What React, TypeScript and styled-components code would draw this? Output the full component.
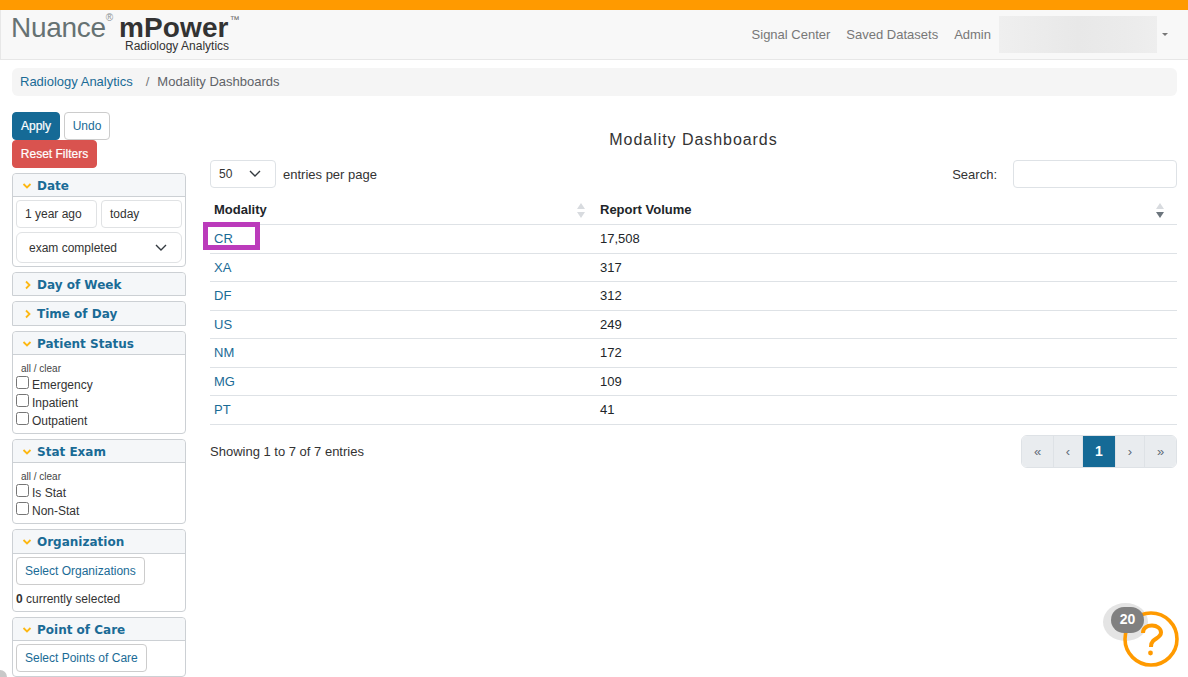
import React from "react";
import styled, { createGlobalStyle } from "styled-components";

const GlobalStyle = createGlobalStyle`
  * { box-sizing: border-box; }
  html, body { margin: 0; height: 100%; overflow: hidden; background: #fff; }
  body { font-family: "Liberation Sans", Arial, sans-serif; font-size: 12px; color: #333; }
`;

const rows = [
  ["CR", "17,508"],
  ["XA", "317"],
  ["DF", "312"],
  ["US", "249"],
  ["NM", "172"],
  ["MG", "109"],
  ["PT", "41"],
];

const Chevron = ({ open }: { open: boolean }) => (
  <ChevronIcon viewBox="0 0 10 10" $open={open}>
    <path d={open ? "M1.5 3 L5 6.5 L8.5 3" : "M3 1.5 L6.5 5 L3 8.5"} />
  </ChevronIcon>
);

const SelectArrow = () => (
  <SelectArrowIcon viewBox="0 0 12 8">
    <path d="M1 1 L6 6 L11 1" />
  </SelectArrowIcon>
);

const Check = ({ label }: { label: string }) => (
  <CheckRow>
    <CheckBox />
    <span>{label}</span>
  </CheckRow>
);

export default function App() {
  return (
    <>
      <GlobalStyle />
      <Page>
        <TopStripe />
        <Navbar>
          <Logo>
            <LogoLine>
              <Nuance>Nuance</Nuance>
              <Reg>®</Reg>
              <MPower>mPower</MPower>
              <Tm>™</Tm>
            </LogoLine>
            <LogoSub>Radiology Analytics</LogoSub>
          </Logo>
          <NavLinks>
            <NavLink>Signal Center</NavLink>
            <NavLink>Saved Datasets</NavLink>
            <NavLink>Admin</NavLink>
            <BlurredUser />
            <Caret />
          </NavLinks>
        </Navbar>
        <Breadcrumb>
          <CrumbLink>Radiology Analytics</CrumbLink>
          <CrumbSep>/</CrumbSep>
          <CrumbCurrent>Modality Dashboards</CrumbCurrent>
        </Breadcrumb>
        <Content>
          <Sidebar>
            <ActionRow>
              <ApplyBtn>Apply</ApplyBtn>
              <UndoBtn>Undo</UndoBtn>
            </ActionRow>
            <ResetBtn>Reset Filters</ResetBtn>
            <Panels>
              <Panel>
                <PanelHead $h={23}><Chevron open />Date</PanelHead>
                <DateBody>
                  <DateRow>
                    <DateInput $w={81}>1 year ago</DateInput>
                    <DateInput $w={81}>today</DateInput>
                  </DateRow>
                  <DateSelect>exam completed<SelectArrow /></DateSelect>
                </DateBody>
              </Panel>
              <ClosedPanel><PanelHead $h={22}><Chevron open={false} />Day of Week</PanelHead></ClosedPanel>
              <ClosedPanel><PanelHead $h={23}><Chevron open={false} />Time of Day</PanelHead></ClosedPanel>
              <Panel>
                <PanelHead $h={23}><Chevron open />Patient Status</PanelHead>
                <CheckBody>
                  <AllClear>all / clear</AllClear>
                  <Check label="Emergency" />
                  <Check label="Inpatient" />
                  <Check label="Outpatient" />
                </CheckBody>
              </Panel>
              <Panel>
                <PanelHead $h={23}><Chevron open />Stat Exam</PanelHead>
                <CheckBody>
                  <AllClear>all / clear</AllClear>
                  <Check label="Is Stat" />
                  <Check label="Non-Stat" />
                </CheckBody>
              </Panel>
              <Panel>
                <PanelHead $h={24}><Chevron open />Organization</PanelHead>
                <SelectBody>
                  <OutlineBtn>Select Organizations</OutlineBtn>
                  <Selected><b>0</b> currently selected</Selected>
                </SelectBody>
              </Panel>
              <Panel>
                <PanelHead $h={23}><Chevron open />Point of Care</PanelHead>
                <SelectBody>
                  <OutlineBtn>Select Points of Care</OutlineBtn>
                </SelectBody>
              </Panel>
            </Panels>
          </Sidebar>
          <Main>
            <Title>Modality Dashboards</Title>
            <Controls>
              <EntriesWrap>
                <EntriesSelect>50<SelectArrow /></EntriesSelect>
                <span>entries per page</span>
              </EntriesWrap>
              <SearchWrap>
                <span>Search:</span>
                <SearchInput />
              </SearchWrap>
            </Controls>
            <Table>
              <thead>
                <tr>
                  <HeadCell $w={386}>Modality<SortArrows $active={false} /></HeadCell>
                  <HeadCell>Report Volume<SortArrows $active /></HeadCell>
                </tr>
              </thead>
              <tbody>
                {rows.map(([name, value], i) => (
                  <tr key={name}>
                    <Cell>
                      <RowLink>{name}</RowLink>
                      {i === 0 && <Highlight />}
                    </Cell>
                    <Cell>{value}</Cell>
                  </tr>
                ))}
              </tbody>
            </Table>
            <Footer>
              <span>Showing 1 to 7 of 7 entries</span>
              <Pager>
                <PageBtn $w={31}>«</PageBtn>
                <PageBtn $w={29}>‹</PageBtn>
                <PageBtn $w={33} $active>1</PageBtn>
                <PageBtn $w={29}>›</PageBtn>
                <PageBtn $w={32}>»</PageBtn>
              </Pager>
            </Footer>
          </Main>
        </Content>
        <HelpWidget>
          <HelpHalo />
          <HelpRing viewBox="0 0 58 58">
            <circle cx="29" cy="29" r="26" />
            <path d="M21 23 C21 18 25 15.5 30 15.5 C35 15.5 39 18.5 39 22.5 C39 27 34 28 31 31 C29.5 32.5 29 34 29 37" />
            <circle className="dot" cx="28.5" cy="43" r="2.4" />
          </HelpRing>
          <HelpBadge>20</HelpBadge>
        </HelpWidget>
        <CornerMark />
      </Page>
    </>
  );
}

const Page = styled.div`
  position: relative;
  width: 1188px;
  height: 677px;
  overflow: hidden;
`;

const TopStripe = styled.div`
  height: 10px;
  background: #ff9a00;
`;

const Navbar = styled.nav`
  height: 50px;
  display: flex;
  align-items: center;
  justify-content: space-between;
  padding: 0 20px 0 10px;
  background: #f8f8f8;
  border-bottom: 1px solid #e7e7e7;
  border-left: 1px solid #e7e7e7;
`;

const Logo = styled.div`
  display: flex;
  flex-direction: column;
  height: 50px;
  padding-top: 5px;
`;

const LogoLine = styled.div`
  display: flex;
  align-items: flex-start;
  height: 26px;
`;

const Nuance = styled.span`
  font-size: 28px;
  line-height: 26px;
  letter-spacing: -0.3px;
  color: #667273;
`;

const Reg = styled.span`
  font-size: 10px;
  line-height: 10px;
  margin-top: -2px;
  color: #8b9394;
`;

const MPower = styled.span`
  font-size: 28px;
  line-height: 26px;
  font-weight: 700;
  color: #333;
  margin-left: 6px;
  letter-spacing: 0.1px;
`;

const Tm = styled.span`
  font-size: 10px;
  line-height: 10px;
  margin-left: 1px;
  color: #666;
`;

const LogoSub = styled.div`
  font-size: 12px;
  line-height: 11px;
  color: #333;
  margin-left: 114px;
`;

const NavLinks = styled.div`
  display: flex;
  align-items: center;
`;

const NavLink = styled.span`
  font-size: 13px;
  color: #777;
  margin-right: 16px;
  &:nth-child(3) { margin-right: 8px; }
`;

const BlurredUser = styled.div`
  width: 158px;
  height: 37px;
  background: linear-gradient(90deg, #efefef, #e8e8e8 50%, #ebebeb 80%, #eeeeee);
`;

const Caret = styled.div`
  width: 0;
  height: 0;
  margin-left: 5px;
  border-left: 3px solid transparent;
  border-right: 3px solid transparent;
  border-top: 3px solid #777;
`;

const Breadcrumb = styled.div`
  display: flex;
  align-items: center;
  height: 28px;
  margin: 8px 11px 0 12px;
  padding: 0 8px 2px;
  background: #f5f5f5;
  border-radius: 6px;
  font-size: 13px;
`;

const CrumbLink = styled.span`
  color: #1a6b96;
`;

const CrumbSep = styled.span`
  color: #777;
  margin: 0 8px 0 13px;
`;

const CrumbCurrent = styled.span`
  color: #5f6368;
`;

const Content = styled.div`
  display: flex;
  padding: 16px 11px 0 12px;
`;

const Sidebar = styled.aside`
  width: 174px;
  flex-shrink: 0;
  margin-right: 24px;
`;

const ActionRow = styled.div`
  display: flex;
  gap: 4px;
`;

const BaseBtn = styled.button`
  font-family: inherit;
  font-size: 12px;
  height: 28px;
  padding: 0;
  border-radius: 4px;
`;

const ApplyBtn = styled(BaseBtn)`
  width: 48px;
  background: #156a96;
  border: 1px solid #156a96;
  color: #fff;
  -webkit-text-stroke: 0.2px #fff;
`;

const UndoBtn = styled(BaseBtn)`
  width: 46px;
  background: #fff;
  border: 1px solid #ccc;
  color: #1a6b96;
`;

const ResetBtn = styled(BaseBtn)`
  display: block;
  width: 85px;
  background: #d9534f;
  border: 1px solid #d9534f;
  color: #fff;
  -webkit-text-stroke: 0.2px #fff;
`;

const Panels = styled.div`
  display: flex;
  flex-direction: column;
  gap: 5px;
  margin-top: 5px;
`;

const Panel = styled.section`
  border: 1px solid #ccd0d4;
  border-radius: 4px;
  background: #fff;
`;

const ClosedPanel = styled(Panel)`
  border-radius: 4px 4px 0 0;
`;

const PanelHead = styled.div<{ $h: number }>`
  display: flex;
  align-items: center;
  height: ${(p) => p.$h}px;
  padding: 1px 0 0 9px;
  gap: 5px;
  background: #f5f7f9;
  border-bottom: 1px solid #ccd0d4;
  border-radius: 4px 4px 0 0;
  font-family: "DejaVu Sans", sans-serif;
  font-weight: 700;
  font-size: 12px;
  color: #1a6b96;
  ${ClosedPanel} & { border-bottom: none; }
`;

const ChevronIcon = styled.svg<{ $open: boolean }>`
  width: 10px;
  height: 10px;
  flex-shrink: 0;
  margin-left: ${(p) => (p.$open ? 0 : 1)}px;
  margin-right: ${(p) => (p.$open ? 0 : -1)}px;
  path {
    fill: none;
    stroke: #fdb813;
    stroke-width: 1.8;
  }
`;

const DateBody = styled.div`
  padding: 3px 3px;
`;

const DateRow = styled.div`
  display: flex;
  gap: 4px;
`;

const DateInput = styled.div<{ $w: number }>`
  width: ${(p) => p.$w}px;
  height: 28px;
  line-height: 26px;
  padding-left: 8px;
  border: 1px solid #e0e2e4;
  border-radius: 4px;
  color: #333;
`;

const DateSelect = styled.div`
  display: flex;
  align-items: center;
  justify-content: space-between;
  height: 31px;
  margin-top: 4px;
  padding: 0 14px 0 12px;
  border: 1px solid #e0e2e4;
  border-radius: 6px;
`;

const SelectArrowIcon = styled.svg`
  width: 12px;
  height: 8px;
  path {
    fill: none;
    stroke: #343a40;
    stroke-width: 1.4;
  }
`;

const CheckBody = styled.div`
  padding: 8px 3px 3px;
`;

const AllClear = styled.div`
  font-size: 10px;
  line-height: 11px;
  padding-left: 5px;
  margin-bottom: 2px;
  color: #444;
`;

const CheckRow = styled.div`
  display: flex;
  align-items: center;
  gap: 3px;
  height: 18px;
`;

const CheckBox = styled.span`
  width: 13px;
  height: 13px;
  margin-top: -6px;
  border: 1px solid #767676;
  border-radius: 2.5px;
  background: #fff;
`;

const SelectBody = styled.div`
  padding: 3px 3px 4px;
`;

const OutlineBtn = styled.div`
  display: inline-block;
  height: 28px;
  line-height: 26px;
  padding: 0 8px;
  border: 1px solid #ccc;
  border-radius: 4px;
  color: #1a6b96;
`;

const Selected = styled.div`
  margin-top: 7px;
  line-height: 15px;
`;

const Main = styled.main`
  flex: 1;
  min-width: 0;
  font-size: 13px;
`;

const Title = styled.h1`
  margin: 18px 0 0;
  height: 20px;
  line-height: 20px;
  text-align: center;
  font-size: 16px;
  font-weight: 400;
  letter-spacing: 0.95px;
  color: #333;
`;

const Controls = styled.div`
  display: flex;
  align-items: center;
  justify-content: space-between;
  margin-top: 10px;
  height: 28px;
`;

const EntriesWrap = styled.div`
  display: flex;
  align-items: center;
  gap: 7px;
  font-size: 13px;
`;

const EntriesSelect = styled.div`
  display: flex;
  align-items: center;
  justify-content: space-between;
  width: 66px;
  height: 28px;
  padding: 0 14px 0 8px;
  border: 1px solid #dee2e6;
  border-radius: 4px;
  font-size: 12px;
`;

const SearchWrap = styled.div`
  display: flex;
  align-items: center;
  gap: 16px;
`;

const SearchInput = styled.div`
  width: 164px;
  height: 28px;
  border: 1px solid #dee2e6;
  border-radius: 4px;
`;

const Table = styled.table`
  width: 100%;
  margin-top: 7px;
  border-collapse: collapse;
  table-layout: fixed;
`;

const HeadCell = styled.th<{ $w?: number }>`
  position: relative;
  ${(p) => (p.$w ? `width: ${p.$w}px;` : "")}
  height: 29.5px;
  padding: 0 4px;
  text-align: left;
  font-size: 13px;
  font-weight: 700;
  color: #212529;
  border-bottom: 1px solid #dee2e6;
`;

const SortArrows = styled.span<{ $active: boolean }>`
  position: absolute;
  right: ${(p) => (p.$active ? 13 : 11)}px;
  top: 8px;
  width: 8px;
  height: 15px;
  &::before, &::after {
    content: "";
    position: absolute;
    left: 0;
    border-left: 4px solid transparent;
    border-right: 4px solid transparent;
  }
  &::before {
    top: 0;
    border-bottom: 6px solid #d8dbdf;
  }
  &::after {
    bottom: 0;
    border-top: 6px solid ${(p) => (p.$active ? "#6c757d" : "#d8dbdf")};
  }
`;

const Cell = styled.td`
  position: relative;
  height: 28.5px;
  padding: 0 4px;
  font-size: 13px;
  color: #212529;
  border-bottom: 1px solid #dee2e6;
`;

const RowLink = styled.span`
  color: #1a6b96;
`;

const Highlight = styled.span`
  position: absolute;
  left: -7px;
  top: -3px;
  width: 57px;
  height: 28px;
  border: 5px solid #bb3bbb;
`;

const Footer = styled.div`
  display: flex;
  align-items: center;
  justify-content: space-between;
  margin-top: 10px;
`;

const Pager = styled.div`
  display: flex;
  height: 33px;
  border-radius: 6px;
  overflow: hidden;
  border: 1px solid #dee2e6;
`;

const PageBtn = styled.div<{ $w: number; $active?: boolean }>`
  width: ${(p) => p.$w}px;
  display: flex;
  align-items: center;
  justify-content: center;
  background: ${(p) => (p.$active ? "#156a96" : "#e9ecef")};
  color: ${(p) => (p.$active ? "#fff" : "#5f6b78")};
  font-weight: ${(p) => (p.$active ? 700 : 400)};
  font-size: ${(p) => (p.$active ? 14 : 13)}px;
  & + & { border-left: 1px solid #dee2e6; }
`;

const HelpWidget = styled.div`
  position: absolute;
  left: 1103px;
  top: 603px;
  width: 80px;
  height: 70px;
`;

const HelpHalo = styled.div`
  position: absolute;
  left: 0;
  top: 0;
  width: 45px;
  height: 38px;
  border-radius: 50%;
  background: #e4e4e4;
`;

const HelpRing = styled.svg`
  position: absolute;
  left: 19px;
  top: 6.5px;
  width: 58px;
  height: 58px;
  circle {
    fill: none;
    stroke: #ff9a00;
    stroke-width: 3.6;
  }
  path {
    fill: none;
    stroke: #ff9a00;
    stroke-width: 4;
  }
  .dot {
    fill: #ff9a00;
    stroke: none;
  }
`;

const HelpBadge = styled.div`
  position: absolute;
  left: 8px;
  top: 4px;
  width: 33px;
  height: 26px;
  line-height: 25px;
  border-radius: 13px;
  text-align: center;
  background: #808080;
  color: #fff;
  font-weight: 700;
  font-size: 14px;
`;

const CornerMark = styled.div`
  position: absolute;
  left: 0;
  bottom: 0;
  width: 7px;
  height: 7px;
  background: #c8c8c8;
  border-top-right-radius: 7px;
`;
